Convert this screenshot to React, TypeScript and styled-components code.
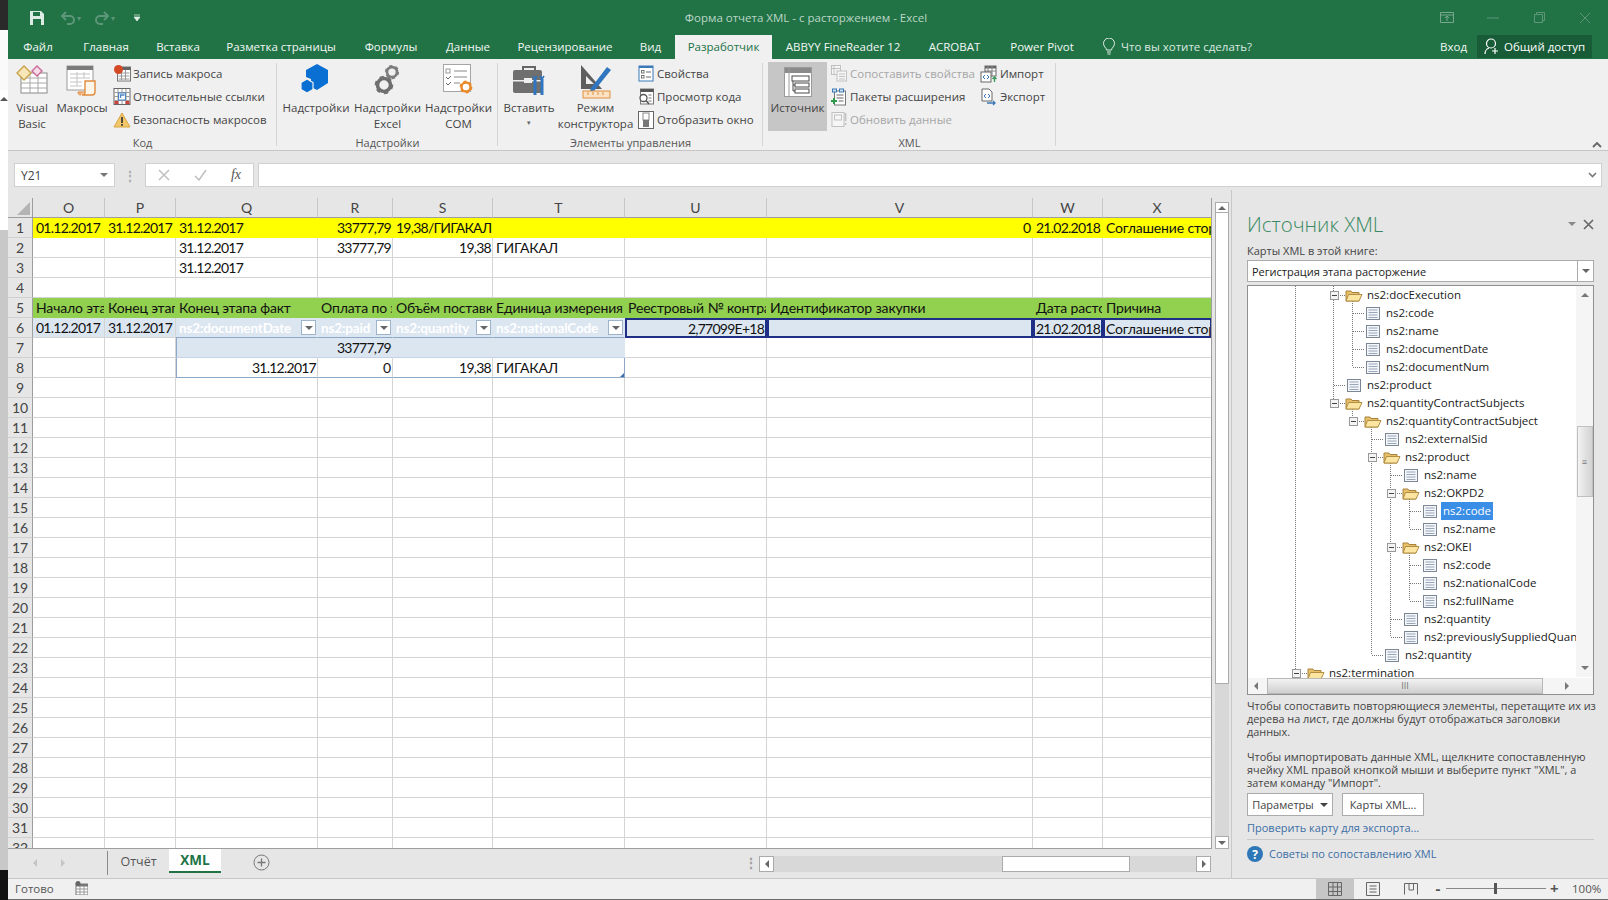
import styled, { createGlobalStyle } from 'styled-components';

const UI = `"Open Sans", "Noto Sans", "Liberation Sans", sans-serif`;
const SHEET = `Lato, "Open Sans", "Liberation Sans", sans-serif`;

const Global = createGlobalStyle`
  html, body { margin: 0; padding: 0; background: #f0f0f0; }
  #root { width: 1608px; height: 900px; overflow: hidden; }
  * { box-sizing: border-box; }
`;

/* ---------- icons ---------- */
const Gear = ({ x, y, r, c }: { x: number; y: number; r: number; c: string }) => (
  <g>
    <circle cx={x} cy={y} r={r} fill="none" stroke={c} strokeWidth={r * 0.55} />
    <circle cx={x} cy={y} r={r * 1.2} fill="none" stroke={c} strokeWidth={r * 0.45} strokeDasharray={`${r * 0.62} ${r * 0.62}`} />
  </g>
);

const IconVisualBasic = () => (
  <svg width="32" height="30" viewBox="0 0 32 30">
    <rect x="5" y="9" width="26" height="20" fill="#fff" stroke="#8a8a8a" />
    <path d="M5 14h26M5 19h26M5 24h26M14 9v20M22 9v20" stroke="#a8a8a8" />
    <path d="M1 9l7-7 7 7-7 7z" fill="#f7e7b8" stroke="#c9a04a" strokeWidth="1.4" />
    <path d="M16 7l5-5 5 5-5 5z" fill="#f8dbe8" stroke="#c86a96" strokeWidth="1.4" />
  </svg>
);
const IconMacros = () => (
  <svg width="32" height="32" viewBox="0 0 32 32">
    <rect x="1" y="2" width="26" height="24" fill="#fff" stroke="#9a9a9a" />
    <rect x="1" y="2" width="26" height="4" fill="#7a7a7a" />
    <path d="M4 10h20M4 14h20M4 18h12M4 22h12M11 8v14M18 8v6" stroke="#c4c4c4" />
    <path d="M19 17h10v11c0 2-1 3-3 3h-10c2 0 3-1 3-3z" fill="#fdf5e8" stroke="#e08a3c" strokeWidth="1.4" />
    <path d="M15 31c-2 0-3-1-3-3h6" fill="#f2b27a" stroke="#e08a3c" />
  </svg>
);
const IconRecord = () => (
  <svg width="17" height="17" viewBox="0 0 17 17">
    <rect x="4" y="2" width="13" height="14" fill="#fff" stroke="#777" />
    <rect x="4" y="2" width="13" height="3" fill="#666" />
    <path d="M5 8h11M5 11h11M5 14h11M8 5v10M12 5v10" stroke="#999" />
    <circle cx="5" cy="4.5" r="4.5" fill="#d34a24" />
  </svg>
);
const IconRelative = () => (
  <svg width="17" height="17" viewBox="0 0 17 17">
    <rect x=".5" y=".5" width="16" height="16" fill="#fff" stroke="#666" />
    <path d="M1 4.500h15M1 8.500h15M1 12.500h15M4.500 1v15M8.500 1v15M12.500 1v15" stroke="#999" />
    <rect x="5" y="5" width="7" height="7" fill="#fff" stroke="#4d84c4" />
    <path d="M11 7H7v3" fill="none" stroke="#4d84c4" strokeWidth="1.400" />
    <rect x="1" y="13" width="4" height="3" fill="#c9443c" />
    <rect x="12" y="13" width="4" height="3" fill="#c9443c" />
  </svg>
);
const IconWarning = () => (
  <svg width="17" height="16" viewBox="0 0 17 16">
    <path d="M8.500 1L16.500 15H.5z" fill="#f2c76a" stroke="#d9a441" />
    <rect x="7.600" y="5" width="1.800" height="6" fill="#3a3a3a" />
    <rect x="7.600" y="12" width="1.800" height="1.800" fill="#3a3a3a" />
  </svg>
);
const IconAddIns = () => (
  <svg width="30" height="30" viewBox="0 0 30 30">
    <path d="M16 0l11 6v13l-11 7-6-3v-8l-5-2V6z" fill="#0a6fd2" />
    <path d="M6 15l6 3.500v7L6 29l-6-3.500v-7z" fill="#0a6fd2" stroke="#f0f0f0" strokeWidth="1.200" />
  </svg>
);
const IconGears = () => (
  <svg width="28" height="32" viewBox="0 0 28 32">
    <Gear x={18} y={8} r={5} c="#7d7d7d" />
    <Gear x={10} y={21} r={6.500} c="#6f6f6f" />
  </svg>
);
const IconCom = () => (
  <svg width="32" height="32" viewBox="0 0 32 32">
    <rect x=".5" y=".5" width="27" height="27" fill="#fff" stroke="#a5a5a5" />
    <path d="M11 7h13M11 13h13M11 19h6" stroke="#888" />
    <rect x="3" y="5" width="4" height="4" fill="none" stroke="#999" />
    <path d="M3 13l2 2 3-3M3 19l2 2 3-3" fill="none" stroke="#666" />
    <Gear x={23} y={23} r={4.500} c="#e98a2c" />
  </svg>
);
const IconToolbox = () => (
  <svg width="32" height="34" viewBox="0 0 32 34">
    <path d="M10 6V3h12v3" fill="none" stroke="#666" strokeWidth="2" />
    <rect x="0" y="6" width="29" height="23" rx="2" fill="#6f6f6f" />
    <rect x="0" y="16" width="29" height="1.500" fill="#f0f0f0" />
    <rect x="11" y="14" width="8" height="5" fill="#eee" />
    <path d="M22 15v16M29 15v16" stroke="#2f75bf" strokeWidth="3" />
    <path d="M20 12l2 3 2-3M27 12l2 3 2-3" fill="none" stroke="#2f75bf" strokeWidth="1.600" />
  </svg>
);
const IconDesign = () => (
  <svg width="32" height="36" viewBox="0 0 32 36">
    <path d="M1 1v24h21z" fill="#5e5e5e" />
    <path d="M6 12v8h8z" fill="#f0f0f0" />
    <path d="M11 24L27 3l4 3-17 21-5 2z" fill="#2f75bf" />
    <rect x="3" y="27" width="27" height="7" fill="#fbe2c4" stroke="#e0903c" />
    <path d="M8 28v3M13 28v3M18 28v3M23 28v3" stroke="#e0903c" />
  </svg>
);
const IconProps = () => (
  <svg width="16" height="17" viewBox="0 0 16 17">
    <rect x="1" y="1" width="14" height="15" fill="#fff" stroke="#3b78b8" />
    <rect x="1" y="1" width="14" height="2" fill="#3b78b8" />
    <rect x="3.500" y="5.500" width="2.500" height="2.500" fill="none" stroke="#777" />
    <rect x="3.500" y="10.500" width="2.500" height="2.500" fill="none" stroke="#777" />
    <path d="M8 7h5M8 12h5" stroke="#666" />
  </svg>
);
const IconViewCode = () => (
  <svg width="17" height="17" viewBox="0 0 17 17">
    <rect x="3" y="1" width="13" height="15" fill="#fff" stroke="#777" />
    <rect x="3" y="1" width="13" height="3" fill="#555" />
    <path d="M11 7h3M11 10h3M11 13h3" stroke="#777" />
    <circle cx="6" cy="10" r="3.500" fill="#fff" stroke="#555" strokeWidth="1.300" />
    <path d="M8.500 12.500l3 3.500" stroke="#555" strokeWidth="1.600" />
  </svg>
);
const IconShowWindow = () => (
  <svg width="16" height="18" viewBox="0 0 16 18">
    <rect x=".5" y=".5" width="15" height="17" fill="#fff" stroke="#666" />
    <rect x="5" y="2" width="6" height="7" fill="#fff" stroke="#888" />
    <rect x="5" y="9" width="6" height="7" fill="#777" />
  </svg>
);
const IconSource = () => (
  <svg width="28" height="30" viewBox="0 0 28 30">
    <rect x=".5" y=".5" width="27" height="29" fill="#fff" stroke="#9a9a9a" />
    <rect x="1" y="1" width="26" height="5" fill="#8a8a8a" />
    <path d="M5 1v28" stroke="#9a9a9a" />
    <rect x="8" y="9" width="17" height="5" fill="#fff" stroke="#4a4a4a" />
    <rect x="11" y="16" width="14" height="4" fill="#fff" stroke="#4a4a4a" />
    <rect x="11" y="22" width="14" height="4" fill="#fff" stroke="#4a4a4a" />
    <path d="M9 14v10h2M9 18h2" fill="none" stroke="#4a4a4a" />
  </svg>
);
const IconMapProps = () => (
  <svg width="16" height="17" viewBox="0 0 16 17" opacity=".45">
    <rect x=".5" y=".5" width="9" height="9" fill="#fff" stroke="#888" />
    <path d="M1 3.500h8M3 1v8" stroke="#888" />
    <rect x="6" y="6" width="9.500" height="10" fill="#fff" stroke="#888" />
    <path d="M8 9h6M8 11.500h6M8 14h6" stroke="#888" />
  </svg>
);
const IconPacks = () => (
  <svg width="17" height="18" viewBox="0 0 17 18">
    <rect x="4" y="3" width="11" height="14" fill="#fff" stroke="#777" />
    <path d="M6 7h7M6 10h7M8 13h5" stroke="#666" />
    <rect x="2" y="1" width="4" height="3" fill="#cfe0f2" stroke="#3b78b8" />
    <rect x="9" y="1" width="4" height="3" fill="#cfe0f2" stroke="#3b78b8" />
    <path d="M3.500 10v6M.5 13h6" stroke="#2e9a4a" strokeWidth="2" />
  </svg>
);
const IconRefresh = () => (
  <svg width="17" height="17" viewBox="0 0 17 17" opacity=".45">
    <rect x="1.500" y="1.500" width="12" height="14" fill="#fff" stroke="#888" />
    <rect x="4" y="4" width="7" height="5" fill="#fff" stroke="#888" />
    <path d="M15 2v8M15 12v2" stroke="#888" strokeWidth="1.600" />
  </svg>
);
const IconImport = () => (
  <svg width="18" height="18" viewBox="0 0 18 18">
    <rect x="5" y="1" width="11" height="10" fill="#fff" stroke="#666" />
    <rect x="5" y="1" width="11" height="2.500" fill="#666" />
    <path d="M8 1v10M12 1v10M5 6h11" stroke="#888" />
    <rect x="1" y="7" width="10" height="10" fill="#fff" stroke="#666" />
    <path d="M5 10l-2 2 2 2M7 10l2 2-2 2" fill="none" stroke="#3b78b8" />
    <path d="M14.500 17v-5M12.500 14l2-2 2 2" fill="none" stroke="#3b9a5a" strokeWidth="1.300" />
  </svg>
);
const IconExport = () => (
  <svg width="18" height="18" viewBox="0 0 18 18">
    <path d="M2 1h7l3 3v9H2z" fill="#fff" stroke="#666" />
    <path d="M6 6L4 8l2 2M8 6l2 2-2 2" fill="none" stroke="#3b78b8" />
    <path d="M7 15h8M13 13l2 2-2 2" fill="none" stroke="#3b78b8" strokeWidth="1.300" />
  </svg>
);
const IconSave = () => (
  <svg width="16" height="16" viewBox="0 0 16 16">
    <path d="M1 1h11l3 3v11H1z" fill="#dcebe3" />
    <rect x="4" y="2" width="7" height="4" fill="#217346" />
    <rect x="4" y="9" width="8" height="6" fill="#217346" />
  </svg>
);
const IconUndo = ({ flip }: { flip?: boolean }) => (
  <svg width="16" height="14" viewBox="0 0 16 14" style={flip ? { transform: 'scaleX(-1)' } : undefined}>
    <path d="M3 5h7a4 4 0 010 8H7M6 1L2 5l4 4" fill="none" stroke="#5d9678" strokeWidth="2" />
  </svg>
);
const IconBulb = () => (
  <svg width="14" height="17" viewBox="0 0 14 17">
    <path d="M4.500 12c0-2-3-3.500-3-6.500a5.500 5.500 0 0111 0c0 3-3 4.500-3 6.500z" fill="none" stroke="#e3efe8" />
    <path d="M5 14h4M5.500 16h3" stroke="#e3efe8" />
  </svg>
);
const IconShare = () => (
  <svg width="16" height="17" viewBox="0 0 16 17">
    <circle cx="7" cy="5.500" r="4.500" fill="none" stroke="#fff" strokeWidth="1.200" />
    <path d="M1 16c0-3 2-5.500 4-6M9 10.500h0M11 10v6M8 13h6" fill="none" stroke="#fff" strokeWidth="1.200" />
  </svg>
);
const IconFolder = () => (
  <svg width="18" height="14" viewBox="0 0 18 14">
    <path d="M1 3h5l1 1.500h7V13H1z" fill="#e9c06a" stroke="#a8823c" />
    <path d="M3.500 6.500H17L14 13H1z" fill="#fbe5a0" stroke="#b38f45" />
  </svg>
);
const IconPage = () => (
  <svg width="14" height="13" viewBox="0 0 14 13">
    <rect x=".5" y=".5" width="13" height="12" fill="#f3f6fb" stroke="#7d8794" />
    <path d="M2.500 3h9M2.500 5.500h9M2.500 8h9M2.500 10.500h9" stroke="#9aa7b8" />
  </svg>
);
const IconGridView = () => (
  <svg width="14" height="14" viewBox="0 0 14 14">
    <path d="M.5.5h13v13H.5zM.5 5h13M.5 9.500h13M5 .5v13M9.500.5v13" fill="none" stroke="#666" />
  </svg>
);
const IconPageView = () => (
  <svg width="14" height="14" viewBox="0 0 14 14">
    <path d="M.5.5h13v13H.5z" fill="none" stroke="#666" />
    <path d="M3.500 4h7M3.500 7h7M3.500 10h7" stroke="#666" />
  </svg>
);
const IconBreakView = () => (
  <svg width="14" height="12" viewBox="0 0 14 12">
    <path d="M.5 11.500V.5h13v11M5 .5V7h4.500V.5" fill="none" stroke="#666" />
  </svg>
);
const IconMacroSmall = () => (
  <svg width="13" height="14" viewBox="0 0 13 14">
    <rect x="1" y="3" width="12" height="11" fill="#fff" stroke="#777" />
    <rect x="1" y="3" width="12" height="2.500" fill="#777" />
    <path d="M1 8h12M1 11h12M5 5v9M9 5v9" stroke="#999" />
    <circle cx="3" cy="2.500" r="2.500" fill="#666" />
  </svg>
);

/* ---------- page ---------- */
const Page = styled.div`
  display: flex;
  width: 1608px;
  height: 900px;
  font-family: ${UI};
  font-size: 11.5px;
  color: #444;
`;
const Desk = styled.div`
  width: 8px;
  display: flex;
  flex-direction: column;
`;
const DeskPart = styled.div<{ $h: number; $c: string }>`
  height: ${(p) => p.$h}px;
  background: ${(p) => p.$c};
  flex: none;
  display: flex;
  justify-content: center;
  padding-top: 7px;
`;
const AppWindow = styled.div`
  width: 1600px;
  display: flex;
  flex-direction: column;
`;

/* title and tabs */
const TitleBar = styled.div`
  height: 35px;
  background: #217346;
  display: flex;
  align-items: center;
  padding-left: 21px;
`;
const Qat = styled.div<{ $w: number }>`
  width: ${(p) => p.$w}px;
  flex: none;
  display: flex;
  align-items: center;
  gap: 1px;
  font-size: 8px;
  color: #5d9678;
`;
const TitleText = styled.div`
  flex: 1;
  text-align: center;
  color: #bcd6c6;
  font-size: 11.5px;
  padding-left: 34px;
`;
const WinBtn = styled.div`
  width: 46px;
  display: flex;
  justify-content: center;
`;
const TabBar = styled.div`
  height: 24px;
  background: #217346;
  display: flex;
  align-items: stretch;
`;
const RibbonTab = styled.div<{ $w: number; $on?: boolean }>`
  width: ${(p) => p.$w}px;
  flex: none;
  display: flex;
  align-items: center;
  justify-content: center;
  padding-bottom: 2px;
  color: ${(p) => (p.$on ? '#217346' : '#f2f7f4')};
  background: ${(p) => (p.$on ? '#f0f0f0' : 'transparent')};
  white-space: nowrap;
`;
const Tell = styled.div`
  display: flex;
  align-items: center;
  gap: 5px;
  margin-left: 13px;
  padding-bottom: 2px;
  color: #dbe9e1;
  flex: 1;
`;
const Login = styled.div`
  color: #f2f7f4;
  display: flex;
  align-items: center;
  padding-bottom: 2px;
  margin-right: 10px;
`;
const ShareBtn = styled.div`
  width: 115px;
  height: 23px;
  background: #185c37;
  color: #fff;
  display: flex;
  align-items: center;
  justify-content: center;
  gap: 4px;
  margin-right: 16px;
`;

/* ribbon */
const Ribbon = styled.div`
  height: 92px;
  background: #f0f0f0;
  border-bottom: 1px solid #c6c6c6;
  display: flex;
  position: relative;
`;
const Group = styled.div<{ $w: number }>`
  width: ${(p) => p.$w}px;
  flex: none;
  display: flex;
  flex-direction: column;
  position: relative;
  &::after {
    content: '';
    position: absolute;
    right: 0;
    top: 4px;
    bottom: 4px;
    width: 1px;
    background: #d4d4d4;
  }
`;
const GroupBody = styled.div`
  height: 76px;
  display: flex;
`;
const GroupLabel = styled.div`
  text-align: center;
  font-size: 11px;
  line-height: 15px;
  color: #555;
`;
const Big = styled.div<{ $w: number; $on?: boolean; $ml?: number }>`
  width: ${(p) => p.$w}px;
  margin-left: ${(p) => p.$ml ?? 0}px;
  flex: none;
  height: ${(p) => (p.$on ? '69px' : '73px')};
  margin-top: ${(p) => (p.$on ? '3px' : '0')};
  background: ${(p) => (p.$on ? '#c6c6c6' : 'transparent')};
  display: flex;
  flex-direction: column;
  align-items: center;
  text-align: center;
  line-height: 16px;
  color: #444;
  white-space: nowrap;
`;
const BigIcon = styled.div<{ $h?: number }>`
  height: ${(p) => p.$h ?? 41}px;
  padding-top: 5px;
  display: flex;
  align-items: flex-start;
  justify-content: center;
  flex: none;
`;
const Caret = styled.div`
  font-size: 7px;
  line-height: 14px;
  color: #666;
`;
const SmallCol = styled.div<{ $ml?: number }>`
  margin-left: ${(p) => p.$ml ?? 0}px;
  padding-top: 3px;
  display: flex;
  flex-direction: column;
  flex: none;
`;
const Small = styled.div<{ $off?: boolean }>`
  height: 23px;
  display: flex;
  align-items: center;
  gap: 2px;
  white-space: nowrap;
  color: ${(p) => (p.$off ? '#a6a6a6' : '#444')};
  & > svg {
    flex: none;
    width: 18px;
  }
`;
const Collapse = styled.div`
  position: absolute;
  right: 6px;
  bottom: 2px;
  line-height: 0;
`;

/* formula bar */
const FormulaBar = styled.div`
  height: 39px;
  flex: none;
  background: #e6e6e6;
  display: flex;
  align-items: flex-start;
  padding: 12px 6px 0 6px;
`;
const NameBox = styled.div`
  width: 101px;
  height: 24px;
  background: #fff;
  border: 1px solid #d0d0d0;
  display: flex;
  align-items: center;
  justify-content: space-between;
  padding: 0 6px;
  font-size: 12px;
  color: #444;
`;
const Grip = styled.div`
  width: 30px;
  height: 24px;
  display: flex;
  align-items: center;
  justify-content: center;
  color: #aaa;
  font-size: 12px;
  font-weight: 700;
`;
const FxBox = styled.div`
  width: 109px;
  height: 24px;
  background: #fff;
  border: 1px solid #d0d0d0;
  display: flex;
  align-items: center;
  justify-content: space-around;
  color: #b4b4b4;
  margin-right: 4px;
  font-size: 14px;
`;
const Fx = styled.span`
  font-family: 'Liberation Serif', serif;
  font-style: italic;
  color: #555;
  font-size: 14px;
`;
const FormulaInput = styled.div`
  flex: 1;
  height: 24px;
  background: #fff;
  border: 1px solid #d0d0d0;
  display: flex;
  align-items: center;
  justify-content: flex-end;
  padding-right: 4px;
`;

/* main */
const Main = styled.div`
  height: 688px;
  flex: none;
  display: flex;
  background: #e6e6e6;
`;
const Sheet = styled.div`
  width: 1224px;
  flex: none;
  display: flex;
  flex-direction: column;
  border-right: 1px solid #c8c8c8;
`;
const SheetBody = styled.div`
  height: 659px;
  padding-top: 8px;
  display: flex;
  flex: none;
`;
const Grid = styled.div`
  width: 1204px;
  height: 651px;
  overflow: hidden;
  display: grid;
  grid-template-columns: 25px 72px 71px 142px 75px 100px 132px 142px 266px 70px 109px;
  grid-auto-rows: 20px;
  background: #fff;
  border-bottom: 1px solid #9e9e9e;
  border-right: 1px solid #9e9e9e;
  font-family: ${SHEET};
  font-size: 14px;
  color: #111;
`;
const ColHead = styled.div`
  background: #e6e6e6;
  height: 20px;
  border-right: 1px solid #c6c6c6;
  border-bottom: 1px solid #9e9e9e;
  display: flex;
  align-items: center;
  justify-content: center;
  color: #444;
`;
const Corner = styled(ColHead)`
  justify-content: flex-end;
  align-items: flex-end;
  padding: 0 2px 2px 0;
  border-right: 1px solid #9e9e9e;
  line-height: 0;
`;
const RowNum = styled.div`
  background: #e6e6e6;
  border-right: 1px solid #9e9e9e;
  border-bottom: 1px solid #d0d0d0;
  display: flex;
  align-items: center;
  justify-content: center;
  color: #444;
`;

type Tone = 'yellow' | 'green' | 'band' | 'mapped' | 'head' | 'tblLeft' | 'tblMid' | 'tblRight' | 'endLeft' | 'endMid' | 'endRight';
const toneBg: Record<string, string> = {
  yellow: '#ffff00',
  green: '#92d050',
  band: '#dce6f1',
  mapped: '#dce6f1',
  head: '#dce6f1',
  tblLeft: '#dce6f1',
  tblMid: '#dce6f1',
  tblRight: '#dce6f1',
};
const TBL = '#8ea9c8';
const Cell = styled.div<{ $right?: boolean; $tone?: Tone; $num?: boolean }>`
  position: relative;
  min-width: 0;
  overflow: hidden;
  white-space: nowrap;
  display: flex;
  align-items: center;
  gap: 2px;
  justify-content: ${(p) => (p.$right ? 'flex-end' : 'flex-start')};
  padding: 0 1px 0 3px;
  letter-spacing: ${(p) => (p.$num ? '-0.75px' : '-0.15px')};
  background: ${(p) => (p.$tone && toneBg[p.$tone]) || '#fff'};
  border-right: 1px solid ${(p) => (p.$tone === 'yellow' || p.$tone === 'green' ? 'transparent' : '#d4d4d4')};
  border-bottom: 1px solid ${(p) => (p.$tone === 'yellow' || p.$tone === 'green' ? 'transparent' : '#d4d4d4')};
  ${(p) => p.$tone === 'mapped' && 'border: 2px solid #1f2f85; padding: 0 1px;'}
  ${(p) => p.$tone === 'head' && `border-bottom: 1px solid ${TBL}; color: #fff; font-weight: 700; font-size: 13.5px; border-right-color: transparent;`}
  ${(p) => (p.$tone === 'tblLeft' || p.$tone === 'endLeft') && `border-left: 1px solid ${TBL};`}
  ${(p) => (p.$tone === 'tblRight' || p.$tone === 'endRight') && `border-right: 1px solid ${TBL};`}
  ${(p) => (p.$tone === 'tblLeft' || p.$tone === 'tblMid' || p.$tone === 'tblRight') && 'border-bottom: 1px solid #c3d2e4; border-right-color: transparent;'}
  ${(p) => (p.$tone === 'endLeft' || p.$tone === 'endMid' || p.$tone === 'endRight') && `border-bottom: 1px solid ${TBL};`}
`;
const HeadText = styled.span`
  flex: 1;
  min-width: 0;
  overflow: hidden;
`;
const Filter = styled.div`
  width: 15px;
  height: 15px;
  flex: none;
  background: #fff;
  border: 1px solid #9fb4cc;
  display: flex;
  align-items: center;
  justify-content: center;
  line-height: 0;
`;
const ResizeHandle = styled.div`
  position: absolute;
  right: 0;
  bottom: 0;
  width: 0;
  height: 0;
  border-left: 4px solid transparent;
  border-bottom: 4px solid #3f6ea8;
`;

/* scrollbars */
const VScroll = styled.div`
  width: 14px;
  margin-left: 3px;
  margin-top: 4px;
  height: 647px;
  background: #d8d8d8;
  display: flex;
  flex-direction: column;
`;
const ScrollBtn = styled.div<{ $h?: number; $w?: number }>`
  height: ${(p) => (p.$h ? `${p.$h}px` : 'auto')};
  width: ${(p) => (p.$w ? `${p.$w}px` : 'auto')};
  flex: none;
  background: #fff;
  border: 1px solid #ababab;
  display: flex;
  align-items: center;
  justify-content: center;
  line-height: 0;
`;
const VThumb = styled.div`
  height: 471px;
  flex: none;
  background: #fff;
  border: 1px solid #ababab;
  border-top: none;
`;
const VGap = styled.div`
  flex: 1;
`;
const Arrow = styled.div<{ $dir: 'up' | 'down' | 'left' | 'right'; $c?: string }>`
  width: 0;
  height: 0;
  ${(p) => {
    const c = p.$c ?? '#666';
    if (p.$dir === 'up') return `border-left:4px solid transparent;border-right:4px solid transparent;border-bottom:4px solid ${c};`;
    if (p.$dir === 'down') return `border-left:4px solid transparent;border-right:4px solid transparent;border-top:4px solid ${c};`;
    if (p.$dir === 'left') return `border-top:4px solid transparent;border-bottom:4px solid transparent;border-right:4px solid ${c};`;
    return `border-top:4px solid transparent;border-bottom:4px solid transparent;border-left:4px solid ${c};`;
  }}
`;

/* sheet tabs */
const SheetTabs = styled.div`
  height: 29px;
  flex: none;
  display: flex;
  align-items: flex-start;
`;
const TabNav = styled.div`
  width: 100px;
  height: 24px;
  margin-top: 2px;
  border-right: 1px solid #8a8a8a;
  display: flex;
  align-items: center;
  padding-left: 25px;
  gap: 24px;
`;
const SheetTab = styled.div<{ $w: number; $on?: boolean }>`
  width: ${(p) => p.$w}px;
  height: 24px;
  flex: none;
  display: flex;
  align-items: center;
  justify-content: center;
  font-size: ${(p) => (p.$on ? '13.500px' : '12.5px')};
  font-weight: ${(p) => (p.$on ? 700 : 400)};
  color: ${(p) => (p.$on ? '#217346' : '#555')};
  background: ${(p) => (p.$on ? '#fff' : 'transparent')};
  border-bottom: ${(p) => (p.$on ? '2px solid #217346' : 'none')};
`;
const AddSheet = styled.div`
  margin: 5px 0 0 32px;
  line-height: 0;
`;
const Dots = styled.div`
  margin: 7px 0 0 473px;
  width: 16px;
  color: #a0a0a0;
  font-size: 14px;
  line-height: 14px;
  font-weight: 700;
  text-align: center;
`;
const HScroll = styled.div`
  margin-top: 7px;
  width: 452px;
  height: 16px;
  background: #d8d8d8;
  display: flex;
`;
const HThumb = styled.div`
  width: 128px;
  margin-left: 228px;
  background: #fff;
  border: 1px solid #ababab;
  flex: none;
`;

/* xml panel */
const Panel = styled.div`
  width: 376px;
  flex: none;
  padding: 19px 14px 0 15px;
  display: flex;
  flex-direction: column;
  color: #444;
`;
const PanelHead = styled.div`
  height: 30px;
  display: flex;
  align-items: center;
  justify-content: space-between;
`;
const PanelTitle = styled.div`
  font-size: 20.5px;
  font-weight: 300;
  color: #3b8a63;
`;
const PanelTools = styled.div`
  display: flex;
  align-items: center;
  gap: 7px;
  color: #666;
  font-size: 14px;
`;
const PanelLabel = styled.div`
  margin-top: 5px;
  height: 14px;
  line-height: 14px;
  font-size: 11px;
`;
const MapSelect = styled.div`
  margin-top: 2px;
  height: 22px;
  background: #fff;
  border: 1px solid #ababab;
  display: flex;
  align-items: center;
  justify-content: space-between;
  font-size: 11px;
  color: #222;
  padding-left: 4px;
`;
const SelectBtn = styled.div`
  width: 16px;
  height: 20px;
  border-left: 1px solid #ababab;
  display: flex;
  align-items: center;
  justify-content: center;
`;
const Tree = styled.div`
  margin-top: 3px;
  height: 410px;
  width: 347px;
  background: #fff;
  border: 1px solid #8f8f8f;
  position: relative;
  overflow: hidden;
  flex: none;
`;
const TreeBody = styled.div`
  width: 329px;
  height: 392px;
  overflow: hidden;
  position: relative;
`;
const TreeLines = styled.svg`
  position: absolute;
  left: 0;
  top: 0;
`;
const TreeRow = styled.div<{ $left: number }>`
  position: relative;
  height: 18px;
  display: flex;
  align-items: center;
  padding-left: ${(p) => p.$left}px;
  white-space: nowrap;
  font-size: 11.5px;
  color: #1a1a1a;
`;
const TreeIcon = styled.div`
  position: relative;
  width: 18px;
  height: 18px;
  flex: none;
  margin-right: 2px;
  display: flex;
  align-items: center;
  justify-content: center;
`;
const Expander = styled.div`
  position: absolute;
  left: -15px;
  top: 5px;
  width: 9px;
  height: 9px;
  background: #f4f4f4;
  border: 1px solid #999;
  &::after {
    content: '';
    position: absolute;
    left: 1px;
    top: 3px;
    width: 5px;
    height: 1px;
    background: #444;
  }
`;
const TreeLabel = styled.span<{ $sel?: boolean }>`
  padding: 0 2px;
  line-height: 18px;
  background: ${(p) => (p.$sel ? '#3a8ee6' : 'transparent')};
  color: ${(p) => (p.$sel ? '#fff' : 'inherit')};
`;
const TreeVBar = styled.div`
  position: absolute;
  right: 0;
  top: 0;
  width: 17px;
  bottom: 17px;
  background: #f5f5f5;
  display: flex;
  flex-direction: column;
  align-items: center;
`;
const TreeArrow = styled.div<{ $top: number }>`
  margin-top: ${(p) => p.$top}px;
  line-height: 0;
`;
const TreeVThumb = styled.div`
  margin-top: 129px;
  width: 16px;
  height: 71px;
  flex: none;
  background: linear-gradient(90deg, #f2f2f2, #d2d2d2);
  border: 1px solid #c0c0c0;
  color: #777;
  font-size: 9px;
  display: flex;
  align-items: center;
  justify-content: center;
`;
const TreeHBar = styled.div`
  position: absolute;
  left: 0;
  right: 0;
  bottom: 0;
  height: 16px;
  background: #f5f5f5;
  display: flex;
  align-items: center;
  padding-left: 6px;
`;
const TreeHThumb = styled.div`
  margin-left: 9px;
  width: 276px;
  height: 16px;
  background: linear-gradient(180deg, #f2f2f2, #cfcfcf);
  border: 1px solid #b8b8b8;
  color: #777;
  font-size: 9px;
  line-height: 13px;
  text-align: center;
  margin-right: 22px;
`;
const Help = styled.div<{ $mt: number }>`
  margin-top: ${(p) => p.$mt}px;
  font-size: 10.9px;
  line-height: 13px;
  color: #444;
  white-space: nowrap;
`;
const PanelButtons = styled.div`
  margin-top: 4px;
  display: flex;
  gap: 9px;
`;
const PanelBtn = styled.div<{ $w: number }>`
  width: ${(p) => p.$w}px;
  height: 23px;
  background: #fff;
  border: 1px solid #ababab;
  display: flex;
  align-items: center;
  justify-content: center;
  gap: 6px;
  font-size: 11px;
`;
const Link = styled.div`
  color: #3c6ea5;
  font-size: 11px;
  line-height: 14px;
`;
const CheckLink = styled(Link)`
  margin-top: 5px;
  padding-bottom: 4px;
  border-bottom: 1px solid #c8c8c8;
  height: 19px;
`;
const TipRow = styled.div`
  margin-top: 6px;
  display: flex;
  align-items: center;
  gap: 6px;
`;
const HelpDot = styled.div`
  width: 16px;
  height: 16px;
  border-radius: 50%;
  background: #2f78b8;
  color: #fff;
  font-size: 12px;
  font-weight: 700;
  display: flex;
  align-items: center;
  justify-content: center;
`;

/* status bar */
const Status = styled.div`
  height: 22px;
  flex: none;
  background: #f0f0f0;
  border-top: 1px solid #c8c8c8;
  border-bottom: 1px solid #6a6a6a;
  display: flex;
  align-items: stretch;
  color: #555;
`;
const Ready = styled.div`
  display: flex;
  align-items: center;
  gap: 21px;
  padding: 0 0 2px 7px;
  flex: 1;
`;
const ViewBtn = styled.div<{ $on?: boolean }>`
  width: 38px;
  flex: none;
  display: flex;
  align-items: center;
  justify-content: center;
  background: ${(p) => (p.$on ? '#c6c6c6' : 'transparent')};
`;
const Zoom = styled.div`
  display: flex;
  align-items: center;
  margin-left: 4px;
  padding-bottom: 2px;
  width: 174px;
  flex: none;
  color: #555;
`;
const ZoomSign = styled.div`
  width: 8px;
  font-size: 15px;
  font-weight: 700;
  line-height: 15px;
  text-align: center;
  flex: none;
`;
const ZoomTrack = styled.div`
  width: 100px;
  height: 1px;
  background: #888;
  margin: 0 4px;
  position: relative;
  flex: none;
`;
const ZoomThumb = styled.div`
  position: absolute;
  left: 48px;
  top: -5px;
  width: 3px;
  height: 11px;
  background: #555;
`;
const ZoomValue = styled.div`
  margin-left: 14px;
  white-space: nowrap;
`;

/* ---------- data ---------- */
const COLS = ['O', 'P', 'Q', 'R', 'S', 'T', 'U', 'V', 'W', 'X'];
type C = { t?: string; r?: boolean; tone?: Tone; filter?: boolean; handle?: boolean };
const Y: Tone = 'yellow';
const G: Tone = 'green';
const SPECIAL: Record<number, C[]> = {
  1: [
    { t: '01.12.2017', tone: Y }, { t: '31.12.2017', tone: Y }, { t: '31.12.2017', tone: Y },
    { t: '33777,79', r: true, tone: Y }, { t: '19,38/ГИГАКАЛ', tone: Y }, { tone: Y }, { tone: Y },
    { t: '0', r: true, tone: Y }, { t: '21.02.2018', tone: Y }, { t: 'Соглашение сторон', tone: Y },
  ],
  2: [{}, {}, { t: '31.12.2017' }, { t: '33777,79', r: true }, { t: '19,38', r: true }, { t: 'ГИГАКАЛ' }, {}, {}, {}, {}],
  3: [{}, {}, { t: '31.12.2017' }, {}, {}, {}, {}, {}, {}, {}],
  5: [
    { t: 'Начало этапа', tone: G }, { t: 'Конец этапа', tone: G }, { t: 'Конец этапа факт', tone: G },
    { t: 'Оплата по этапу', tone: G }, { t: 'Объём поставки', tone: G }, { t: 'Единица измерения', tone: G },
    { t: 'Реестровый № контракта', tone: G }, { t: 'Идентификатор закупки', tone: G },
    { t: 'Дата расторжения', tone: G }, { t: 'Причина', tone: G },
  ],
  6: [
    { t: '01.12.2017', tone: 'band' }, { t: '31.12.2017', tone: 'band' },
    { t: 'ns2:documentDate', tone: 'head', filter: true }, { t: 'ns2:paid', tone: 'head', filter: true },
    { t: 'ns2:quantity', tone: 'head', filter: true }, { t: 'ns2:nationalCode', tone: 'head', filter: true },
    { t: '2,77099E+18', r: true, tone: 'mapped' }, { tone: 'mapped' }, { t: '21.02.2018', tone: 'mapped' },
    { t: 'Соглашение сторон', tone: 'mapped' },
  ],
  7: [{}, {}, { tone: 'tblLeft' }, { t: '33777,79', r: true, tone: 'tblMid' }, { tone: 'tblMid' }, { tone: 'tblRight' }, {}, {}, {}, {}],
  8: [
    {}, {}, { t: '31.12.2017', r: true, tone: 'endLeft' }, { t: '0', r: true, tone: 'endMid' },
    { t: '19,38', r: true, tone: 'endMid' }, { t: 'ГИГАКАЛ', tone: 'endRight', handle: true }, {}, {}, {}, {},
  ],
};

const NODES: { n: string; l: number; f?: boolean; sel?: boolean }[] = [
  { n: 'ns2:docExecution', l: 2, f: true },
  { n: 'ns2:code', l: 3 },
  { n: 'ns2:name', l: 3 },
  { n: 'ns2:documentDate', l: 3 },
  { n: 'ns2:documentNum', l: 3 },
  { n: 'ns2:product', l: 2 },
  { n: 'ns2:quantityContractSubjects', l: 2, f: true },
  { n: 'ns2:quantityContractSubject', l: 3, f: true },
  { n: 'ns2:externalSid', l: 4 },
  { n: 'ns2:product', l: 4, f: true },
  { n: 'ns2:name', l: 5 },
  { n: 'ns2:OKPD2', l: 5, f: true },
  { n: 'ns2:code', l: 6, sel: true },
  { n: 'ns2:name', l: 6 },
  { n: 'ns2:OKEI', l: 5, f: true },
  { n: 'ns2:code', l: 6 },
  { n: 'ns2:nationalCode', l: 6 },
  { n: 'ns2:fullName', l: 6 },
  { n: 'ns2:quantity', l: 5 },
  { n: 'ns2:previouslySuppliedQuantity', l: 5 },
  { n: 'ns2:quantity', l: 4 },
  { n: 'ns2:termination', l: 0, f: true },
];
// text x inside the tree, per depth
const textX = (l: number) => 81 + 19 * l;
const rowY = (i: number) => 9 + 18 * i;
// vertical guides: depth, first row (-1 = from the top), last row
const GUIDES: [number, number, number][] = [
  [0, -1, 21],
  [2, -1, 6],
  [3, 0, 4],
  [3, 6, 7],
  [4, 7, 20],
  [5, 9, 19],
  [6, 11, 13],
  [6, 14, 17],
];

const CELL_ROWS = Array.from({ length: 32 }, (_, i) => i + 1);
const isNumeric = (t?: string) => !!t && /^\d[\d.,+E/]/.test(t);

export default function App() {
  return (
    <Page>
      <Global />
      <Desk>
        <DeskPart $h={30} $c="#2a2a2a" />
        <DeskPart $h={60} $c="#fafafa" />
        <DeskPart $h={140} $c="#fff">
          <Arrow $dir="up" $c="#555" />
        </DeskPart>
        <DeskPart $h={640} $c="#c8c8c8" />
        <DeskPart $h={30} $c="#111" />
      </Desk>
      <AppWindow>
        <TitleBar>
          <Qat $w={125}>
            <IconSave />
            <span style={{ width: 13 }} />
            <IconUndo />
            <span style={{ width: 4 }}>▾</span>
            <span style={{ width: 11 }} />
            <IconUndo flip />
            <span style={{ width: 12 }}>▾</span>
            <span style={{ width: 8 }} />
            <svg width="8" height="8" viewBox="0 0 8 8"><path d="M1 1h6M1 3h6L4 7z" fill="#e3efe8" stroke="#e3efe8" strokeWidth=".7" /></svg>
          </Qat>
          <TitleText>Форма отчета XML - с расторжением - Excel</TitleText>
          <WinBtn>
            <svg width="14" height="11" viewBox="0 0 14 11"><path d="M.5.5h13v10H.5zM.5 3h13M7 9V4.500M5 6l2-2 2 2" fill="none" stroke="#77a78c" /></svg>
          </WinBtn>
          <WinBtn>
            <svg width="12" height="2" viewBox="0 0 12 2"><path d="M0 1h12" stroke="#5d9678" /></svg>
          </WinBtn>
          <WinBtn>
            <svg width="11" height="11" viewBox="0 0 11 11"><path d="M2.500 2.500V.5h8v8h-2M.5 2.500h8v8h-8z" fill="none" stroke="#5d9678" /></svg>
          </WinBtn>
          <WinBtn>
            <svg width="12" height="12" viewBox="0 0 12 12"><path d="M1 1l10 10M11 1L1 11" stroke="#5d9678" /></svg>
          </WinBtn>
        </TitleBar>
        <TabBar>
          <RibbonTab $w={60}>Файл</RibbonTab>
          <RibbonTab $w={76}>Главная</RibbonTab>
          <RibbonTab $w={68}>Вставка</RibbonTab>
          <RibbonTab $w={138}>Разметка страницы</RibbonTab>
          <RibbonTab $w={82}>Формулы</RibbonTab>
          <RibbonTab $w={72}>Данные</RibbonTab>
          <RibbonTab $w={122}>Рецензирование</RibbonTab>
          <RibbonTab $w={49}>Вид</RibbonTab>
          <RibbonTab $w={97} $on>Разработчик</RibbonTab>
          <RibbonTab $w={142}>ABBYY FineReader 12</RibbonTab>
          <RibbonTab $w={81}>ACROBAT</RibbonTab>
          <RibbonTab $w={94}>Power Pivot</RibbonTab>
          <Tell>
            <IconBulb />
            Что вы хотите сделать?
          </Tell>
          <Login>Вход</Login>
          <ShareBtn>
            <IconShare />
            Общий доступ
          </ShareBtn>
        </TabBar>
        <Ribbon>
          <Group $w={269}>
            <GroupBody>
              <Big $w={48}>
                <BigIcon><IconVisualBasic /></BigIcon>
                Visual<br />Basic
              </Big>
              <Big $w={52}>
                <BigIcon><IconMacros /></BigIcon>
                Макросы
              </Big>
              <SmallCol $ml={5}>
                <Small><IconRecord />Запись макроса</Small>
                <Small><IconRelative />Относительные ссылки</Small>
                <Small><IconWarning />Безопасность макросов</Small>
              </SmallCol>
            </GroupBody>
            <GroupLabel>Код</GroupLabel>
          </Group>
          <Group $w={221}>
            <GroupBody>
              <Big $w={72} $ml={3}>
                <BigIcon><IconAddIns /></BigIcon>
                Надстройки
              </Big>
              <Big $w={71}>
                <BigIcon><IconGears /></BigIcon>
                Надстройки<br />Excel
              </Big>
              <Big $w={71}>
                <BigIcon><IconCom /></BigIcon>
                Надстройки<br />COM
              </Big>
            </GroupBody>
            <GroupLabel>Надстройки</GroupLabel>
          </Group>
          <Group $w={265}>
            <GroupBody>
              <Big $w={60} $ml={1}>
                <BigIcon><IconToolbox /></BigIcon>
                Вставить
                <Caret>▾</Caret>
              </Big>
              <Big $w={73}>
                <BigIcon><IconDesign /></BigIcon>
                Режим<br />конструктора
              </Big>
              <SmallCol $ml={5}>
                <Small><IconProps />Свойства</Small>
                <Small><IconViewCode />Просмотр кода</Small>
                <Small><IconShowWindow />Отобразить окно</Small>
              </SmallCol>
            </GroupBody>
            <GroupLabel>Элементы управления</GroupLabel>
          </Group>
          <Group $w={293}>
            <GroupBody>
              <Big $w={59} $ml={5} $on>
                <BigIcon $h={38}><IconSource /></BigIcon>
                Источник
              </Big>
              <SmallCol $ml={3}>
                <Small $off><IconMapProps />Сопоставить свойства</Small>
                <Small><IconPacks />Пакеты расширения</Small>
                <Small $off><IconRefresh />Обновить данные</Small>
              </SmallCol>
              <SmallCol $ml={5}>
                <Small><IconImport />Импорт</Small>
                <Small><IconExport />Экспорт</Small>
              </SmallCol>
            </GroupBody>
            <GroupLabel>XML</GroupLabel>
          </Group>
          <Collapse>
            <svg width="10" height="7" viewBox="0 0 10 7"><path d="M1 6l4-4 4 4" fill="none" stroke="#666" strokeWidth="1.800" /></svg>
          </Collapse>
        </Ribbon>
        <FormulaBar>
          <NameBox>
            Y21
            <Arrow $dir="down" $c="#777" />
          </NameBox>
          <Grip>⋮</Grip>
          <FxBox>
            <svg width="12" height="12" viewBox="0 0 12 12"><path d="M1 1l10 10M11 1L1 11" stroke="#c0c0c0" strokeWidth="1.500" /></svg>
            <svg width="13" height="12" viewBox="0 0 13 12"><path d="M1 7l4 4 7-10" fill="none" stroke="#c0c0c0" strokeWidth="1.500" /></svg>
            <Fx>fx</Fx>
          </FxBox>
          <FormulaInput>
            <svg width="9" height="6" viewBox="0 0 9 6"><path d="M1 1l3.500 3.500L8 1" fill="none" stroke="#777" strokeWidth="1.600" /></svg>
          </FormulaInput>
        </FormulaBar>
        <Main>
          <Sheet>
            <SheetBody>
              <Grid>
                <Corner>
                  <svg width="13" height="13" viewBox="0 0 13 13"><path d="M13 0v13H0z" fill="#b4b4b4" /></svg>
                </Corner>
                {COLS.map((c) => (
                  <ColHead key={c}>{c}</ColHead>
                ))}
                {CELL_ROWS.map((r) => [
                  <RowNum key={`n${r}`}>{r}</RowNum>,
                  ...COLS.map((c, i) => {
                    const cell: C = SPECIAL[r]?.[i] ?? {};
                    return (
                      <Cell key={c + r} $right={cell.r} $tone={cell.tone} $num={isNumeric(cell.t)}>
                        {cell.filter ? <HeadText>{cell.t}</HeadText> : cell.t}
                        {cell.filter && (
                          <Filter>
                            <Arrow $dir="down" $c="#666" />
                          </Filter>
                        )}
                        {cell.handle && <ResizeHandle />}
                      </Cell>
                    );
                  }),
                ])}
              </Grid>
              <VScroll>
                <ScrollBtn $h={11}><Arrow $dir="up" /></ScrollBtn>
                <VThumb />
                <VGap />
                <ScrollBtn $h={13}><Arrow $dir="down" /></ScrollBtn>
              </VScroll>
            </SheetBody>
            <SheetTabs>
              <TabNav>
                <Arrow $dir="left" $c="#c4c4c4" />
                <Arrow $dir="right" $c="#c4c4c4" />
              </TabNav>
              <SheetTab $w={61}>Отчёт</SheetTab>
              <SheetTab $w={52} $on>XML</SheetTab>
              <AddSheet>
                <svg width="17" height="17" viewBox="0 0 17 17"><circle cx="8.500" cy="8.500" r="7.500" fill="none" stroke="#777" /><path d="M8.500 4.500v8M4.500 8.500h8" stroke="#777" strokeWidth="1.300" /></svg>
              </AddSheet>
              <Dots>⋮</Dots>
              <HScroll>
                <ScrollBtn $w={15}><Arrow $dir="left" /></ScrollBtn>
                <HThumb />
                <VGap />
                <ScrollBtn $w={15}><Arrow $dir="right" /></ScrollBtn>
              </HScroll>
            </SheetTabs>
          </Sheet>
          <Panel>
            <PanelHead>
              <PanelTitle>Источник XML</PanelTitle>
              <PanelTools>
                <Arrow $dir="down" $c="#888" />
                <svg width="11" height="11" viewBox="0 0 11 11"><path d="M1 1l9 9M10 1l-9 9" stroke="#666" strokeWidth="1.600" /></svg>
              </PanelTools>
            </PanelHead>
            <PanelLabel>Карты XML в этой книге:</PanelLabel>
            <MapSelect>
              Регистрация этапа расторжение
              <SelectBtn><Arrow $dir="down" /></SelectBtn>
            </MapSelect>
            <Tree>
              <TreeBody>
                <TreeLines width="329" height="392">
                  <g stroke="#777" strokeDasharray="1 1" fill="none">
                    {GUIDES.map(([l, a, b]) => (
                      <path key={`${l}${a}`} d={`M${textX(l) - 33.5} ${a < 0 ? 0 : rowY(a)}V${rowY(b)}`} />
                    ))}
                    {NODES.map((n, i) => (
                      <path key={i} d={`M${textX(n.l) - 33} ${rowY(i) + 0.5}H${textX(n.l) - 22}`} />
                    ))}
                  </g>
                </TreeLines>
                {NODES.map((n, i) => (
                  <TreeRow key={i} $left={textX(n.l) - 22}>
                    <TreeIcon>
                      {n.f ? <IconFolder /> : <IconPage />}
                      {n.f && <Expander />}
                    </TreeIcon>
                    <TreeLabel $sel={n.sel}>{n.n}</TreeLabel>
                  </TreeRow>
                ))}
              </TreeBody>
              <TreeVBar>
                <TreeArrow $top={7}><Arrow $dir="up" $c="#777" /></TreeArrow>
                <TreeVThumb>≡</TreeVThumb>
                <TreeArrow $top={169}><Arrow $dir="down" $c="#777" /></TreeArrow>
              </TreeVBar>
              <TreeHBar>
                <Arrow $dir="left" $c="#777" />
                <TreeHThumb>III</TreeHThumb>
                <Arrow $dir="right" $c="#777" />
              </TreeHBar>
            </Tree>
            <Help $mt={4}>
              Чтобы сопоставить повторяющиеся элементы, перетащите их из<br />
              дерева на лист, где должны будут отображаться заголовки<br />
              данных.
            </Help>
            <Help $mt={12}>
              Чтобы импортировать данные XML, щелкните сопоставленную<br />
              ячейку XML правой кнопкой мыши и выберите пункт "XML", а<br />
              затем команду "Импорт".
            </Help>
            <PanelButtons>
              <PanelBtn $w={86}>Параметры <Arrow $dir="down" $c="#444" /></PanelBtn>
              <PanelBtn $w={82}>Карты XML...</PanelBtn>
            </PanelButtons>
            <CheckLink>Проверить карту для экспорта...</CheckLink>
            <TipRow>
              <HelpDot>?</HelpDot>
              <Link>Советы по сопоставлению XML</Link>
            </TipRow>
          </Panel>
        </Main>
        <Status>
          <Ready>
            Готово
            <IconMacroSmall />
          </Ready>
          <ViewBtn $on><IconGridView /></ViewBtn>
          <ViewBtn><IconPageView /></ViewBtn>
          <ViewBtn><IconBreakView /></ViewBtn>
          <Zoom>
            <ZoomSign>-</ZoomSign>
            <ZoomTrack><ZoomThumb /></ZoomTrack>
            <ZoomSign>+</ZoomSign>
            <ZoomValue>100%</ZoomValue>
          </Zoom>
        </Status>
      </AppWindow>
    </Page>
  );
}
